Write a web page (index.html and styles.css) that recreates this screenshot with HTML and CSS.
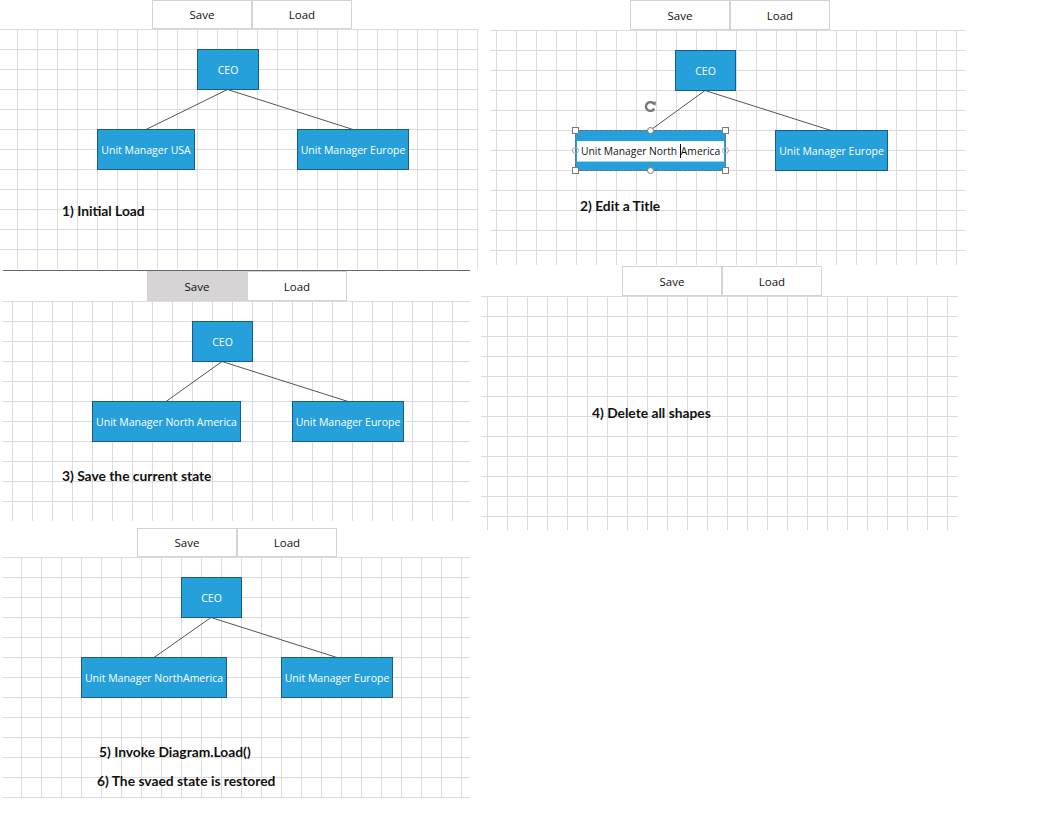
FILE: index.html
```html
<!DOCTYPE html>
<html>
<head>
<meta charset="utf-8">
<link rel="stylesheet" href="styles.css">
</head>
<body>
<div class="desktop">

  <!-- Panel 1 -->
  <section class="panel p1">
    <div class="toolbar"><button class="btn">Save</button><button class="btn">Load</button></div>
    <div class="canvas">
      <svg class="wires" width="478" height="240"><line x1="227.5" y1="60.5" x2="146" y2="100.5"/><line x1="227.5" y1="60.5" x2="353" y2="100.5"/></svg>
      <div class="node n-ceo">CEO</div>
      <div class="node n-left">Unit Manager USA</div>
      <div class="node n-right">Unit Manager Europe</div>
      <p class="note">1) Initial Load</p>
    </div>
  </section>

  <!-- Panel 2 -->
  <section class="panel p2">
    <div class="toolbar"><button class="btn">Save</button><button class="btn">Load</button></div>
    <div class="canvas">
      <svg class="wires" width="475" height="235"><line x1="215" y1="60.5" x2="160" y2="100.5"/><line x1="215" y1="60.5" x2="341" y2="100.5"/></svg>
      <div class="node n-ceo">CEO</div>
      <div class="node n-edit">
        <div class="editbox">Unit Manager North <span class="caret"></span>America</div>
      </div>
      <div class="sel"></div>
      <span class="h sq tl"></span><span class="h sq tr"></span><span class="h sq bl"></span><span class="h sq br"></span>
      <span class="h ci mt"></span><span class="h ci mb"></span><span class="h ci ml"></span><span class="h ci mr"></span>
      <svg class="rot" width="13" height="13" viewBox="0 0 13 13"><path d="M10.3 4.6 A4.4 4.4 0 1 0 10.2 8.6" fill="none" stroke="#777" stroke-width="2.4"/><path d="M7.6 2 L11.8 1.6 L11.6 6 Z" fill="#777"/></svg>
      <div class="node n-right">Unit Manager Europe</div>
      <p class="note">2) Edit a Title</p>
    </div>
  </section>

  <!-- Panel 3 -->
  <section class="panel p3">
    <div class="toolbar"><button class="btn pressed">Save</button><button class="btn">Load</button></div>
    <div class="canvas">
      <svg class="wires" width="467" height="220"><line x1="219" y1="60.5" x2="163" y2="100.5"/><line x1="219" y1="60.5" x2="345" y2="100.5"/></svg>
      <div class="node n-ceo">CEO</div>
      <div class="node n-left">Unit Manager North America</div>
      <div class="node n-right">Unit Manager Europe</div>
      <p class="note">3) Save the current state</p>
    </div>
  </section>

  <!-- Panel 4 -->
  <section class="panel p4">
    <div class="toolbar"><button class="btn">Save</button><button class="btn">Load</button></div>
    <div class="canvas">
      <p class="note">4) Delete all shapes</p>
    </div>
  </section>

  <!-- Panel 5 -->
  <section class="panel p5">
    <div class="toolbar"><button class="btn">Save</button><button class="btn">Load</button></div>
    <div class="canvas">
      <svg class="wires" width="467" height="241"><line x1="208" y1="60.5" x2="151" y2="100.5"/><line x1="208" y1="60.5" x2="334" y2="100.5"/></svg>
      <div class="node n-ceo">CEO</div>
      <div class="node n-left">Unit Manager NorthAmerica</div>
      <div class="node n-right">Unit Manager Europe</div>
      <p class="note n5a">5) Invoke Diagram.Load()</p>
      <p class="note n5b">6) The svaed state is restored</p>
    </div>
  </section>

</div>
</body>
</html>
```

FILE: styles.css
```css
* { box-sizing: border-box; }
html, body { margin: 0; padding: 0; background: #ffffff; }
body { width: 1061px; height: 840px; overflow: hidden; font-family: "Open Sans", "Noto Sans", sans-serif; }

.desktop { position: relative; width: 1061px; height: 840px; }

.panel { position: absolute; display: flex; flex-direction: column; background: #fff; }

.toolbar { display: flex; background: #fff; }

.btn {
  width: 100px;
  margin: 0;
  padding: 0;
  background: #fff;
  border: 1px solid #d4d4d4;
  font-family: "Open Sans", "Noto Sans", sans-serif;
  font-size: 11.5px;
  color: #111;
  text-align: center;
}
.btn.pressed { background: #d6d4d4; border-color: #d6d4d4; }

.canvas {
  position: relative;
  background-color: #fff;
  background-image:
    linear-gradient(to right, #dcdcdc 1px, transparent 1px),
    linear-gradient(to bottom, #dcdcdc 1px, transparent 1px);
  background-size: 20px 20px;
}

.wires { position: absolute; left: 0; top: 0; }
.wires line { stroke: #555; stroke-width: 1; }

.node {
  position: absolute;
  top: 100px;
  height: 41px;
  display: flex;
  align-items: center;
  justify-content: center;
  background: #26a0da;
  border: 1px solid #175c8c;
  color: #fff;
  font-family: "Open Sans", "Noto Sans", sans-serif;
  font-size: 10.5px;
  white-space: nowrap;
}
.node.n-ceo { top: 20px; }

.note {
  position: absolute;
  margin: 0;
  font-family: Lato, "Open Sans", sans-serif;
  font-weight: 700;
  font-size: 13.8px;
  line-height: 16px;
  color: #111;
  white-space: nowrap;
}

/* Panel 1 */
.p1 { left: 0; top: 0; width: 478px; }
.p1 .toolbar { height: 29px; padding-left: 152px; }
.p1 .btn { height: 29px; }
.p1 .canvas { height: 240px; background-position: 17px 0; }
.p1 .n-ceo { left: 197px; width: 62px; }
.p1 .n-left { left: 97px; width: 98px; }
.p1 .n-right { left: 297px; width: 112px; }
.p1 .note { left: 62px; top: 174px; }

/* Panel 2 */
.p2 { left: 490px; top: 0; width: 475px; }
.p2 .toolbar { height: 30px; padding-left: 140px; }
.p2 .btn { height: 30px; }
.p2 .canvas { height: 235px; background-position: 6px 0; }
.p2 .n-ceo { left: 185px; width: 61px; }
.p2 .n-right { left: 285px; width: 113px; }
.p2 .note { left: 90px; top: 168px; }
.p2 .n-edit { left: 85px; width: 151px; border-color: #26a0da; padding: 0 1px; }
.editbox {
  display: block;
  width: 100%;
  height: 21px;
  margin-top: 1px;
  background: #fff;
  border-bottom: 1px solid #9fd3ee;
  color: #111;
  font-size: 10.3px;
  line-height: 20px;
  padding-left: 4px;
  white-space: pre;
  overflow: hidden;
}
.caret { display: inline-block; width: 1px; height: 14px; background: #000; vertical-align: -3px; }
.sel {
  position: absolute;
  left: 85px; top: 100px; width: 151px; height: 41px;
  border: 1px dashed #6e6e6e;
}
.h { position: absolute; background: #fff; border: 1px solid #7a7a7a; }
.h.sq { width: 7px; height: 7px; }
.h.ci { width: 7px; height: 7px; border-radius: 50%; }
.tl { left: 82px; top: 97px; }
.tr { left: 232px; top: 97px; }
.bl { left: 82px; top: 137px; }
.br { left: 232px; top: 137px; }
.mt { left: 157px; top: 97px; }
.mb { left: 157px; top: 137px; }
.ml { left: 82px; top: 117px; background: transparent; border-color: #aaa; }
.mr { left: 232px; top: 117px; background: transparent; border-color: #aaa; }
.rot { position: absolute; left: 154px; top: 70px; }

/* Panel 3 */
.p3 { left: 3px; top: 270px; width: 467px; border-top: 1px solid #5d6878; }
.p3 .toolbar { height: 30px; padding-left: 144px; }
.p3 .btn { height: 30px; }
.p3 .canvas { height: 220px; background-position: 9px 0; }
.p3 .n-ceo { left: 189px; width: 61px; }
.p3 .n-left { left: 89px; width: 149px; }
.p3 .n-right { left: 289px; width: 112px; }
.p3 .note { left: 59px; top: 167px; }

/* Panel 4 */
.p4 { left: 481px; top: 266px; width: 477px; }
.p4 .toolbar { height: 30px; padding-left: 141px; }
.p4 .btn { height: 30px; }
.p4 .canvas { height: 234px; background-position: 6px 0; }
.p4 .note { left: 111px; top: 109px; }

/* Panel 5 */
.p5 { left: 3px; top: 528px; width: 467px; }
.p5 .toolbar { height: 29px; padding-left: 134px; }
.p5 .btn { height: 29px; }
.p5 .canvas { height: 241px; background-position: 18px 0; }
.p5 .n-ceo { left: 178px; width: 61px; }
.p5 .n-left { left: 78px; width: 146px; }
.p5 .n-right { left: 278px; width: 112px; }
.p5 .n5a { left: 96px; top: 187px; }
.p5 .n5b { left: 94px; top: 216px; }
```
